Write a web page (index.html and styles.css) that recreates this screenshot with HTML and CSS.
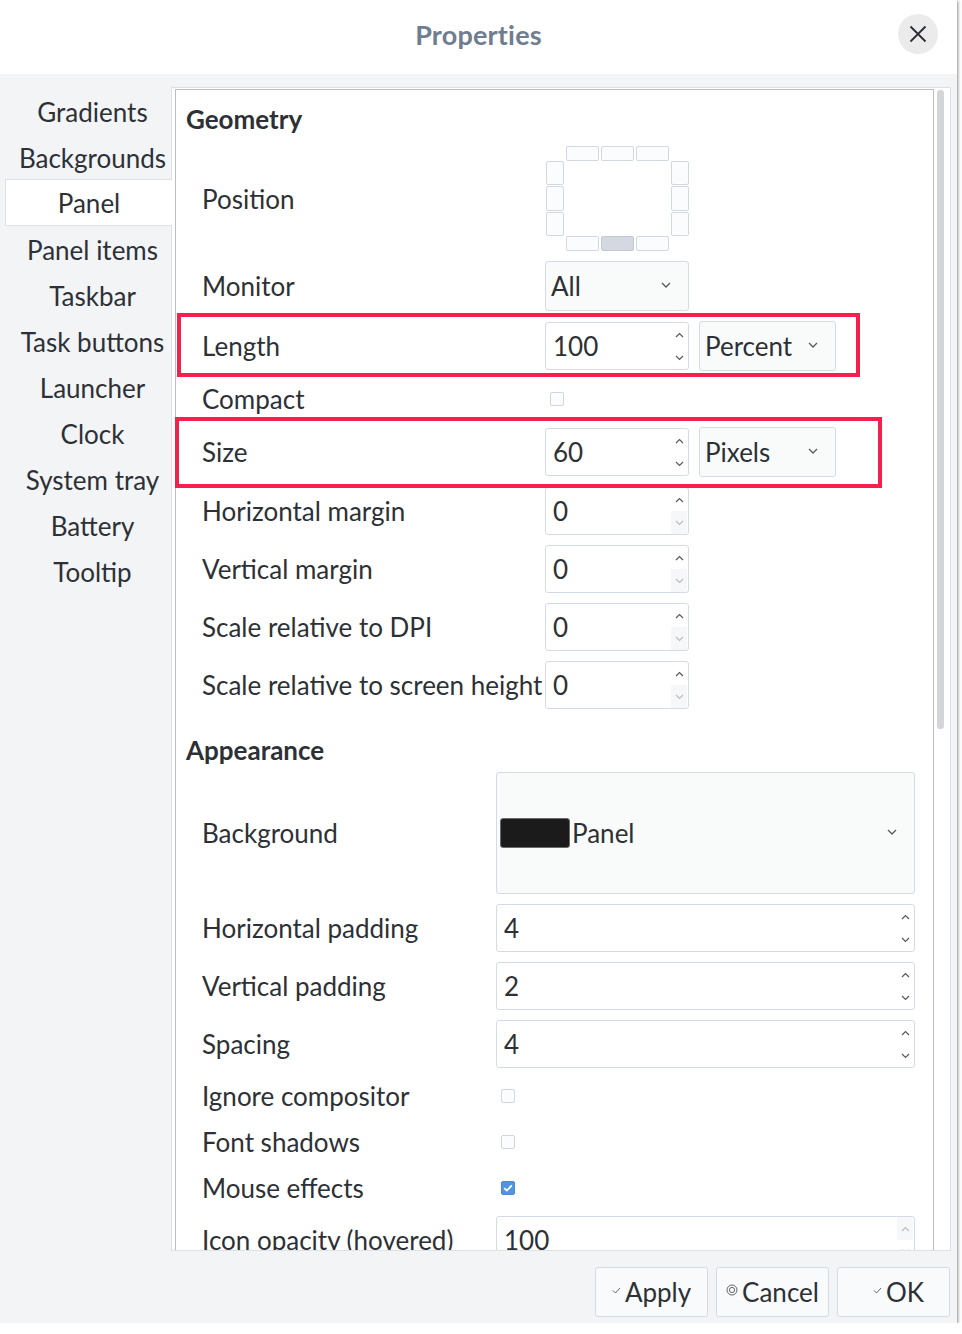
FILE: index.html
```html
<!DOCTYPE html>
<html>
<head>
<meta charset="utf-8">
<title>Properties</title>
<link rel="stylesheet" href="styles.css">
</head>
<body>
<div class="dialog">
  <header class="titlebar">
    <span></span>
    <h1 class="title">Properties</h1>
    <button class="close" aria-label="Close">
      <svg width="18" height="18" viewBox="0 0 18 18"><path d="M1.5 1.5 L16.5 16.5 M16.5 1.5 L1.5 16.5" stroke="#2b2e31" stroke-width="1.8" fill="none"/></svg>
    </button>
  </header>

  <div class="main">
    <nav class="sidebar">
      <div class="nav-item">Gradients</div>
      <div class="nav-item">Backgrounds</div>
      <div class="nav-item selected">Panel</div>
      <div class="nav-item">Panel items</div>
      <div class="nav-item">Taskbar</div>
      <div class="nav-item">Task buttons</div>
      <div class="nav-item">Launcher</div>
      <div class="nav-item">Clock</div>
      <div class="nav-item">System tray</div>
      <div class="nav-item">Battery</div>
      <div class="nav-item">Tooltip</div>
    </nav>

    <div class="frame">
      <div class="scroll">
        <div class="content">
          <section class="section">
            <h2 class="section-title">Geometry</h2>
            <div class="form geometry">
              <div class="label">Position</div>
              <div class="field">
                <div class="pos">
                  <div class="pos-top"><span class="pb"></span><span class="pb"></span><span class="pb"></span></div>
                  <div class="pos-left"><span class="pb"></span><span class="pb"></span><span class="pb"></span></div>
                  <div class="pos-center"></div>
                  <div class="pos-right"><span class="pb"></span><span class="pb"></span><span class="pb"></span></div>
                  <div class="pos-bottom"><span class="pb"></span><span class="pb on"></span><span class="pb"></span></div>
                </div>
              </div>

              <div class="label">Monitor</div>
              <div class="field">
                <div class="combo w144"><span class="combo-text">All</span><svg class="chev" width="10" height="6" viewBox="0 0 10 6"><path d="M1 1 L5 5 L9 1" stroke="#55595e" stroke-width="1.3" fill="none"/></svg></div>
              </div>

              <div class="label">Length</div>
              <div class="field pair">
                <div class="spin w144"><span class="spin-text">100</span><div class="arrows"><span class="arr"><svg width="9" height="6" viewBox="0 0 9 6"><path d="M1 5 L4.5 1.5 L8 5" stroke="#55595e" stroke-width="1.2" fill="none"/></svg></span><span class="arr"><svg width="9" height="6" viewBox="0 0 9 6"><path d="M1 1 L4.5 4.5 L8 1" stroke="#55595e" stroke-width="1.2" fill="none"/></svg></span></div></div>
                <div class="combo w137"><span class="combo-text">Percent</span><svg class="chev" width="10" height="6" viewBox="0 0 10 6"><path d="M1 1 L5 5 L9 1" stroke="#55595e" stroke-width="1.3" fill="none"/></svg></div>
              </div>

              <div class="label">Compact</div>
              <div class="field"><span class="check cb-geo"></span></div>

              <div class="label">Size</div>
              <div class="field pair">
                <div class="spin w144"><span class="spin-text">60</span><div class="arrows"><span class="arr"><svg width="9" height="6" viewBox="0 0 9 6"><path d="M1 5 L4.5 1.5 L8 5" stroke="#55595e" stroke-width="1.2" fill="none"/></svg></span><span class="arr"><svg width="9" height="6" viewBox="0 0 9 6"><path d="M1 1 L4.5 4.5 L8 1" stroke="#55595e" stroke-width="1.2" fill="none"/></svg></span></div></div>
                <div class="combo w137"><span class="combo-text">Pixels</span><svg class="chev" width="10" height="6" viewBox="0 0 10 6"><path d="M1 1 L5 5 L9 1" stroke="#55595e" stroke-width="1.3" fill="none"/></svg></div>
              </div>

              <div class="label">Horizontal margin</div>
              <div class="field">
                <div class="spin w144"><span class="spin-text">0</span><div class="arrows"><span class="arr"><svg width="9" height="6" viewBox="0 0 9 6"><path d="M1 5 L4.5 1.5 L8 5" stroke="#55595e" stroke-width="1.2" fill="none"/></svg></span><span class="arr off"><svg width="9" height="6" viewBox="0 0 9 6"><path d="M1 1 L4.5 4.5 L8 1" stroke="#b9bdc2" stroke-width="1.2" fill="none"/></svg></span></div></div>
              </div>

              <div class="label">Vertical margin</div>
              <div class="field">
                <div class="spin w144"><span class="spin-text">0</span><div class="arrows"><span class="arr"><svg width="9" height="6" viewBox="0 0 9 6"><path d="M1 5 L4.5 1.5 L8 5" stroke="#55595e" stroke-width="1.2" fill="none"/></svg></span><span class="arr off"><svg width="9" height="6" viewBox="0 0 9 6"><path d="M1 1 L4.5 4.5 L8 1" stroke="#b9bdc2" stroke-width="1.2" fill="none"/></svg></span></div></div>
              </div>

              <div class="label">Scale relative to DPI</div>
              <div class="field">
                <div class="spin w144"><span class="spin-text">0</span><div class="arrows"><span class="arr"><svg width="9" height="6" viewBox="0 0 9 6"><path d="M1 5 L4.5 1.5 L8 5" stroke="#55595e" stroke-width="1.2" fill="none"/></svg></span><span class="arr off"><svg width="9" height="6" viewBox="0 0 9 6"><path d="M1 1 L4.5 4.5 L8 1" stroke="#b9bdc2" stroke-width="1.2" fill="none"/></svg></span></div></div>
              </div>

              <div class="label">Scale relative to screen height</div>
              <div class="field">
                <div class="spin w144"><span class="spin-text">0</span><div class="arrows"><span class="arr"><svg width="9" height="6" viewBox="0 0 9 6"><path d="M1 5 L4.5 1.5 L8 5" stroke="#55595e" stroke-width="1.2" fill="none"/></svg></span><span class="arr off"><svg width="9" height="6" viewBox="0 0 9 6"><path d="M1 1 L4.5 4.5 L8 1" stroke="#b9bdc2" stroke-width="1.2" fill="none"/></svg></span></div></div>
              </div>
            </div>
          </section>

          <section class="section">
            <h2 class="section-title appearance-title">Appearance</h2>
            <div class="form appearance">
              <div class="label">Background</div>
              <div class="field">
                <div class="combo bgcombo"><span class="swatch"></span><span class="combo-text tight">Panel</span><svg class="chev" width="10" height="6" viewBox="0 0 10 6"><path d="M1 1 L5 5 L9 1" stroke="#55595e" stroke-width="1.3" fill="none"/></svg></div>
              </div>

              <div class="label">Horizontal padding</div>
              <div class="field">
                <div class="spin wide"><span class="spin-text">4</span><div class="arrows"><span class="arr"><svg width="9" height="6" viewBox="0 0 9 6"><path d="M1 5 L4.5 1.5 L8 5" stroke="#55595e" stroke-width="1.2" fill="none"/></svg></span><span class="arr"><svg width="9" height="6" viewBox="0 0 9 6"><path d="M1 1 L4.5 4.5 L8 1" stroke="#55595e" stroke-width="1.2" fill="none"/></svg></span></div></div>
              </div>

              <div class="label">Vertical padding</div>
              <div class="field">
                <div class="spin wide"><span class="spin-text">2</span><div class="arrows"><span class="arr"><svg width="9" height="6" viewBox="0 0 9 6"><path d="M1 5 L4.5 1.5 L8 5" stroke="#55595e" stroke-width="1.2" fill="none"/></svg></span><span class="arr"><svg width="9" height="6" viewBox="0 0 9 6"><path d="M1 1 L4.5 4.5 L8 1" stroke="#55595e" stroke-width="1.2" fill="none"/></svg></span></div></div>
              </div>

              <div class="label">Spacing</div>
              <div class="field">
                <div class="spin wide"><span class="spin-text">4</span><div class="arrows"><span class="arr"><svg width="9" height="6" viewBox="0 0 9 6"><path d="M1 5 L4.5 1.5 L8 5" stroke="#55595e" stroke-width="1.2" fill="none"/></svg></span><span class="arr"><svg width="9" height="6" viewBox="0 0 9 6"><path d="M1 1 L4.5 4.5 L8 1" stroke="#55595e" stroke-width="1.2" fill="none"/></svg></span></div></div>
              </div>

              <div class="label">Ignore compositor</div>
              <div class="field"><span class="check cb-app"></span></div>

              <div class="label">Font shadows</div>
              <div class="field"><span class="check cb-app"></span></div>

              <div class="label">Mouse effects</div>
              <div class="field"><span class="check cb-app checked"><svg width="10" height="8" viewBox="0 0 10 8"><path d="M1.2 4.2 L3.8 6.6 L8.8 1.4" stroke="#fff" stroke-width="1.8" fill="none"/></svg></span></div>

              <div class="label">Icon opacity (hovered)</div>
              <div class="field">
                <div class="spin wide"><span class="spin-text">100</span><div class="arrows"><span class="arr off"><svg width="9" height="6" viewBox="0 0 9 6"><path d="M1 5 L4.5 1.5 L8 5" stroke="#b9bdc2" stroke-width="1.2" fill="none"/></svg></span><span class="arr"><svg width="9" height="6" viewBox="0 0 9 6"><path d="M1 1 L4.5 4.5 L8 1" stroke="#55595e" stroke-width="1.2" fill="none"/></svg></span></div></div>
              </div>
            </div>
          </section>
        </div>
      </div>
      <div class="vbar"><div class="thumb"></div></div>
    </div>
  </div>

  <footer class="buttons">
    <button class="btn"><svg width="9" height="7" viewBox="0 0 9 7"><path d="M1 3.5 L3.5 6 L8 1" stroke="#666" stroke-width="1" fill="none"/></svg>Apply</button>
    <button class="btn"><svg width="12" height="12" viewBox="0 0 12 12"><circle cx="6" cy="6" r="5" stroke="#666" stroke-width="1" fill="none"/><circle cx="6" cy="6" r="2.6" stroke="#666" stroke-width="1" fill="none"/></svg>Cancel</button>
    <button class="btn btn-ok"><svg width="9" height="7" viewBox="0 0 9 7"><path d="M1 3.5 L3.5 6 L8 1" stroke="#666" stroke-width="1" fill="none"/></svg>OK</button>
  </footer>

  <div class="mark mark-length"></div>
  <div class="mark mark-size"></div>
</div>
</body>
</html>
```

FILE: styles.css
```css
html, body {
  margin: 0;
  padding: 0;
  background: #ffffff;
}

body {
  font-family: Lato, "Noto Sans", "DejaVu Sans", sans-serif;
  color: #2d3136;
  font-size: 26px;
}

.dialog {
  position: relative;
  width: 957px;
  height: 1323px;
  background: #f3f4f6;
  box-shadow: 1px 1px 3px rgba(0, 0, 0, 0.45);
  display: flex;
  flex-direction: column;
}

/* title bar */
.titlebar {
  height: 74px;
  flex: 0 0 74px;
  background: #ffffff;
  display: grid;
  grid-template-columns: 1fr auto 1fr;
  align-items: center;
}

.title {
  margin: 0 0 5px 0;
  font-size: 27px;
  font-weight: 700;
  color: #6f7d91;
  letter-spacing: 0.2px;
}

.close {
  justify-self: end;
  margin-right: 19px;
  margin-bottom: 6px;
  width: 40px;
  height: 40px;
  border-radius: 50%;
  border: none;
  background: #ebebec;
  display: flex;
  align-items: center;
  justify-content: center;
  padding: 0;
}

/* main area */
.main {
  flex: 1;
  min-height: 0;
  display: flex;
  padding-top: 13px;
}

.sidebar {
  width: 171px;
  flex: 0 0 171px;
  box-sizing: border-box;
  padding: 2px 0 0 5px;
  display: flex;
  flex-direction: column;
}

.nav-item {
  height: 46px;
  line-height: 46px;
  text-align: center;
  padding-left: 9px;
  white-space: nowrap;
}

.nav-item.selected {
  position: relative;
  z-index: 2;
  margin-right: -1px;
  height: 47px;
  line-height: 46px;
  box-sizing: border-box;
  padding-left: 0;
  background: #ffffff;
  border: 1px solid #dde1e8;
  border-right: none;
  margin-top: -2px;
  margin-bottom: 1px;
}

.frame {
  width: 780px;
  flex: 0 0 780px;
  box-sizing: border-box;
  border: 1px solid #dde1e8;
  background: #ffffff;
  padding: 1px 0 0 3px;
  display: flex;
}

.scroll {
  width: 759px;
  box-sizing: border-box;
  border: 1px solid #bdbdbd;
  border-bottom: none;
  overflow: hidden;
}

.vbar {
  width: 16px;
  box-sizing: border-box;
  padding: 1px 6px 0 3px;
}

.thumb {
  height: 639px;
  border-radius: 3px;
  background: #d3d5d9;
}

.content {
  padding-top: 14px;
}

.section-title {
  margin: 0 0 12px 0;
  padding-left: 10px;
  font-size: 26px;
  font-weight: 700;
  line-height: 30px;
  height: 30px;
}

.appearance-title {
  margin-top: 26px;
  margin-bottom: 7px;
}

.form {
  display: grid;
  row-gap: 10px;
  margin-left: 26px;
  align-items: center;
}

.geometry {
  grid-template-columns: 343px auto;
  grid-template-rows: 105px 50px 50px 36px 50px 48px 48px 48px 48px;
}

.appearance {
  grid-template-columns: 294px auto;
  grid-template-rows: 122px 48px 48px 48px 36px 36px 36px 48px;
}

.label {
  white-space: nowrap;
  line-height: 30px;
}

.field {
  display: flex;
  align-items: center;
  height: 100%;
}

.pair {
  gap: 10px;
}

/* position widget */
.pos {
  margin-left: 1px;
  width: 143px;
  height: 105px;
  display: grid;
  grid-template-columns: 18px 1fr 18px;
  grid-template-rows: 15px 1fr 15px;
  column-gap: 2px;
}

.pb {
  display: block;
  box-sizing: border-box;
  border: 1px solid #d2d8e2;
  border-radius: 2px;
  background: #fbfcfd;
}

.pb.on {
  background: #d3d8e1;
  border-color: #c3c9d3;
}

.pos-top, .pos-bottom {
  display: flex;
  gap: 2px;
}

.pos-top { grid-column: 2; grid-row: 1; }
.pos-bottom { grid-column: 2; grid-row: 3; }
.pos-top .pb, .pos-bottom .pb { flex: 1; }

.pos-left, .pos-right {
  display: flex;
  flex-direction: column;
  gap: 1px;
}

.pos-left { grid-column: 1; grid-row: 2; }
.pos-right { grid-column: 3; grid-row: 2; }
.pos-left .pb, .pos-right .pb { flex: 1; }

.pos-center { grid-column: 2; grid-row: 2; }

/* inputs */
.spin, .combo {
  box-sizing: border-box;
  border: 1px solid #d4dbe6;
  border-radius: 3px;
  display: flex;
  align-items: center;
  position: relative;
}

.spin {
  height: 48px;
  background: #ffffff;
}

.combo {
  height: 50px;
  background: #f9fbfb;
}

.w144 { width: 144px; }
.w137 { width: 137px; }
.wide { width: 419px; }

.spin-text {
  flex: 1;
  padding-left: 7px;
  line-height: 30px;
}

.combo-text {
  flex: 1;
  padding-left: 5px;
  line-height: 30px;
}

.combo-text.tight {
  padding-left: 2px;
}

.chev {
  margin-right: 17px;
  margin-top: -3px;
}

.arrows {
  width: 16px;
  align-self: stretch;
  display: flex;
  flex-direction: column;
  margin-right: 1px;
}

.arr {
  flex: 1;
  display: flex;
  align-items: center;
  justify-content: center;
}

.arr.off {
  background: #f6f7f8;
}

.bgcombo {
  width: 419px;
  height: 122px;
}

.swatch {
  width: 70px;
  height: 30px;
  box-sizing: border-box;
  margin-left: 3px;
  background: #1b1b1b;
  border: 1px solid #6b6b6b;
  border-radius: 3px;
}

.check {
  display: inline-flex;
  align-items: center;
  justify-content: center;
  width: 14px;
  height: 14px;
  box-sizing: border-box;
  border: 1px solid #d0d6df;
  border-radius: 2px;
  background: #fbfcfd;
}

.cb-geo { margin-left: 5px; }
.cb-app { margin-left: 5px; }

.check.checked {
  background: #5294e2;
  border-color: #4c8bd8;
}

/* buttons */
.buttons {
  flex: 0 0 72px;
  box-sizing: border-box;
  display: flex;
  justify-content: flex-end;
  gap: 8px;
  padding: 16px 7px 6px 0;
}

.btn {
  width: 113px;
  height: 50px;
  box-sizing: border-box;
  border: 1px solid #d4dbe6;
  border-radius: 3px;
  background: #f9fafb;
  font-family: Lato, "Noto Sans", "DejaVu Sans", sans-serif;
  font-size: 26px;
  color: #2d3136;
  display: flex;
  align-items: center;
  justify-content: center;
  gap: 4px;
  padding: 0;
}

.btn svg {
  margin-top: -4px;
}

.btn-ok {
  padding-left: 10px;
}

/* annotation overlays */
.mark {
  position: absolute;
  box-sizing: border-box;
  border: 4px solid #f5204e;
  z-index: 5;
}

.mark-length {
  left: 177px;
  top: 313px;
  width: 683px;
  height: 64px;
}

.mark-size {
  left: 175px;
  top: 417px;
  width: 707px;
  height: 71px;
}
```
